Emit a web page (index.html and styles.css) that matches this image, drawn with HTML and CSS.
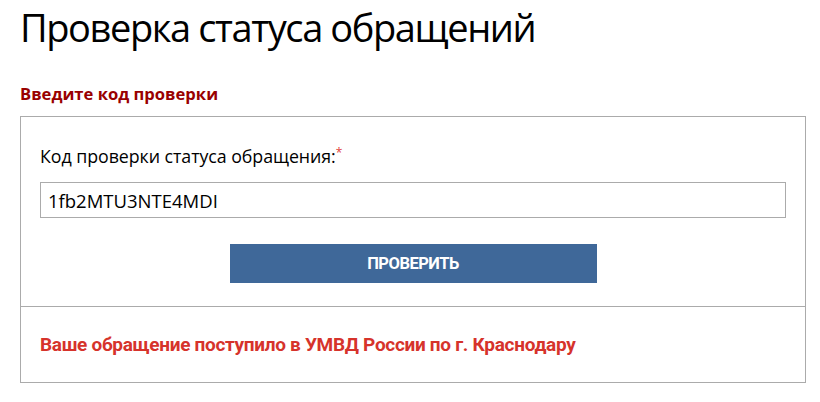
FILE: index.html
```html
<!DOCTYPE html>
<html lang="ru">
<head>
<meta charset="utf-8">
<title>Проверка статуса обращений</title>
<link rel="stylesheet" href="styles.css">
</head>
<body>
<h1 class="page-title">Проверка статуса обращений</h1>
<h2 class="section-title">Введите код проверки</h2>
<div class="panel">
  <form class="panel-form">
    <label class="field-label" for="code">Код проверки статуса обращения:<span class="req">*</span></label>
    <input class="field-input" id="code" type="text" value="1fb2MTU3NTE4MDI">
    <div class="actions">
      <button class="btn" type="button">ПРОВЕРИТЬ</button>
    </div>
  </form>
  <div class="panel-result">Ваше обращение поступило в УМВД России по г. Краснодару</div>
</div>
</body>
</html>
```

FILE: styles.css
```css
html, body {
  margin: 0;
  padding: 0;
  background: #fff;
}
body {
  padding: 0 14px 0 20px;
  font-family: "Open Sans", "Noto Sans", sans-serif;
  color: #000;
}
.page-title {
  margin: 3px 0 0;
  font-size: 38px;
  line-height: 48px;
  letter-spacing: -1.4px;
  font-weight: 400;
  color: #000;
}
.section-title {
  margin: 33px 0 0;
  font-size: 16.6px;
  line-height: 20px;
  font-weight: 700;
  color: #990000;
}
.panel {
  margin-top: 12px;
  border: 1px solid #ababab;
}
.panel-form {
  display: flex;
  flex-direction: column;
  padding: 29px 19px 23px;
  margin: 0;
}
.field-label {
  font-size: 17.8px;
  line-height: 20px;
  letter-spacing: -0.05px;
  color: #000;
}
.req {
  color: #e0403a;
  font-size: 12px;
  vertical-align: top;
  line-height: 14px;
}
.field-input {
  margin-top: 16px;
  height: 36px;
  box-sizing: border-box;
  border: 1px solid #ababab;
  padding: 0 7px;
  font-family: "Open Sans", "Noto Sans", sans-serif;
  font-size: 18.5px;
  color: #000;
  outline: none;
}
.actions {
  display: flex;
  justify-content: center;
  margin-top: 26px;
}
.btn {
  width: 367px;
  height: 39px;
  border: 0;
  background: #3f6899;
  color: #fff;
  font-family: "Roboto", sans-serif;
  font-weight: 700;
  font-size: 16.5px;
  letter-spacing: -0.5px;
  padding: 0;
}
.panel-result {
  border-top: 1px solid #ababab;
  height: 75px;
  display: flex;
  align-items: center;
  padding: 0 19px;
  font-family: "Roboto", sans-serif;
  font-weight: 700;
  font-size: 19px;
  letter-spacing: -0.3px;
  color: #d6332b;
}
```
